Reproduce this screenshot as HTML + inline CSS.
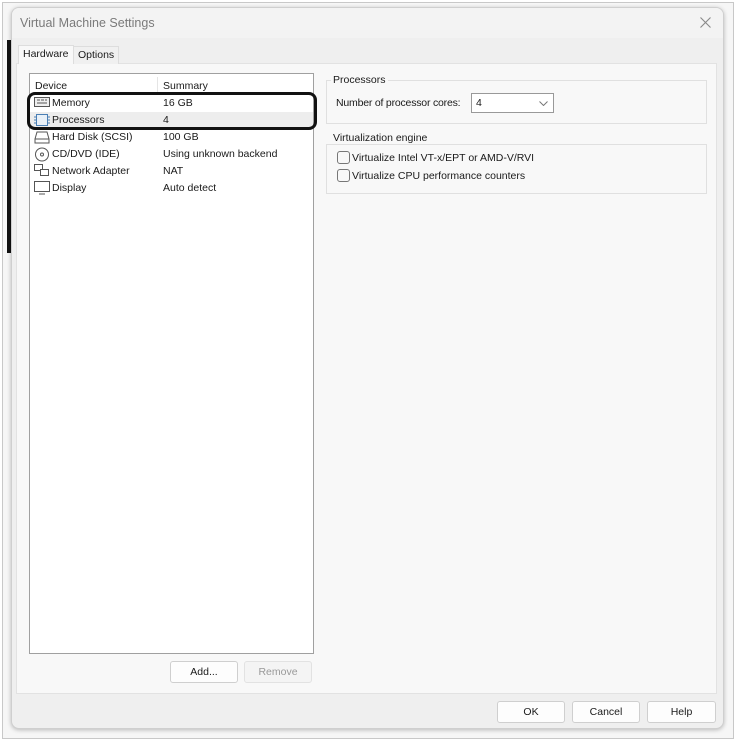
<!DOCTYPE html>
<html><head><meta charset="utf-8"><style>
*{box-sizing:border-box;margin:0;padding:0}
body{width:738px;height:742px;background:#fff;position:relative;overflow:hidden;font-family:"Liberation Sans",sans-serif;font-size:10.5px;color:#1a1a1a}
.frame{position:absolute;left:2px;top:2px;width:732px;height:737px;border:1px solid #c8c8c8;background:#f6f6f6}
.strip{position:absolute;left:7px;top:40px;width:4px;height:213px;background:#111}
.dlg{position:absolute;left:11px;top:7px;width:713px;height:722px;background:#efefef;border:1px solid #cfcfcf;border-radius:8px;box-shadow:0 1px 4px rgba(0,0,0,.25);overflow:hidden}
.title{position:absolute;left:0;top:0;width:100%;height:30px;background:#f3f3f3;font-size:12.5px;color:#7a7a7a;padding:8px 0 0 8px}
.panel{position:absolute;left:4px;top:55px;width:701px;height:631px;background:#f8f8f8;border:1px solid #e2e2e2}
.tab{position:absolute;top:38px;height:18px;padding:2px 4px;border:1px solid #ddd;border-bottom:none;background:#f0f0f0}
.list{position:absolute;left:17px;top:65px;width:285px;height:581px;background:#fff;border:1px solid #a0a0a0}
.row{position:absolute;left:0;width:283px;height:17px;line-height:17px}
.row .n{position:absolute;left:22px}.row .s{position:absolute;left:133px}
.row svg{position:absolute;left:4px;top:1px}
.hl{position:absolute;left:15px;top:84px;width:290px;height:38px;border:3px solid #111;border-radius:8px}
.btn{position:absolute;height:22px;background:#fdfdfd;border:1px solid #cfcfcf;border-radius:3px;text-align:center;line-height:20px}
.grp{position:absolute;border:1px solid #e0e0e0}
.gl{position:absolute;background:#f8f8f8;padding:0 2px}
.cb{position:absolute;width:13px;height:13px;border:1px solid #777;border-radius:3px;background:#f8f8f8}
</style></head><body>
<div class="frame"></div><div class="strip"></div>
<div class="dlg">
<div class="title">Virtual Machine Settings</div>
<svg style="position:absolute;right:12px;top:9px" width="11" height="11"><path d="M0.5 0.5L10.5 10.5M10.5 0.5L0.5 10.5" stroke="#888" stroke-width="1.1"/></svg>
<div class="panel"></div>
<div class="tab" style="left:6px;background:#f8f8f8;top:37px;height:19px">Hardware</div>
<div class="tab" style="left:61px">Options</div>
<div class="list">
<div class="row" style="top:4px"><span style="position:absolute;left:5px">Device</span><span class="s">Summary</span></div>
<div style="position:absolute;left:127px;top:3px;width:1px;height:17px;background:#e5e5e5"></div>
<div class="row" style="top:21px"><svg width="16" height="12"><rect x="0.5" y="1.5" width="15" height="9" fill="#eee" stroke="#555"/><path d="M3 4h3M7 4h3M11 4h2M3 7h10" stroke="#555"/></svg><span class="n">Memory</span><span class="s">16 GB</span></div>
<div class="row" style="top:38px;background:#ededed"><svg width="16" height="14"><rect x="2.5" y="1.5" width="11" height="11" fill="#e8f0f8" stroke="#4a7fb5"/><path d="M0 4h2M0 7h2M0 10h2M14 4h2M14 7h2M14 10h2" stroke="#4a7fb5"/></svg><span class="n">Processors</span><span class="s">4</span></div>
<div class="row" style="top:55px"><svg width="16" height="14"><path d="M3 2h10l2 7v4H1V9z" fill="#fff" stroke="#555"/><path d="M1 9h14" stroke="#555"/></svg><span class="n">Hard Disk (SCSI)</span><span class="s">100 GB</span></div>
<div class="row" style="top:72px"><svg width="16" height="15"><circle cx="8" cy="7.5" r="6.5" fill="#fff" stroke="#555"/><circle cx="8" cy="7.5" r="1.5" fill="none" stroke="#555"/></svg><span class="n">CD/DVD (IDE)</span><span class="s">Using unknown backend</span></div>
<div class="row" style="top:89px"><svg width="16" height="14"><rect x="0.5" y="0.5" width="8" height="6" fill="#fff" stroke="#555"/><rect x="6.5" y="5.5" width="8" height="6" fill="#fff" stroke="#555"/></svg><span class="n">Network Adapter</span><span class="s">NAT</span></div>
<div class="row" style="top:106px"><svg width="17" height="14"><rect x="0.5" y="0.5" width="15" height="10" fill="#fff" stroke="#555"/><path d="M5 13h6" stroke="#555"/></svg><span class="n">Display</span><span class="s">Auto detect</span></div>
</div>
<div class="hl"></div>
<div class="btn" style="left:158px;top:653px;width:68px">Add...</div>
<div class="btn" style="left:232px;top:653px;width:68px;color:#999;background:#f4f4f4;border-color:#e2e2e2">Remove</div>
<div class="grp" style="left:314px;top:72px;width:381px;height:44px"></div>
<div class="gl" style="left:319px;top:66px">Processors</div>
<div style="position:absolute;left:324px;top:89px;letter-spacing:-0.2px">Number of processor cores:</div>
<div style="position:absolute;left:459px;top:85px;width:83px;height:20px;background:#fff;border:1px solid #999;padding:3px 4px">4<svg style="position:absolute;right:5px;top:7px" width="9" height="5"><path d="M0.5 0.5L4.5 4.5L8.5 0.5" stroke="#777" fill="none"/></svg></div>
<div class="grp" style="left:314px;top:136px;width:381px;height:50px"></div>
<div class="gl" style="left:319px;top:124px">Virtualization engine</div>
<div class="cb" style="left:325px;top:143px"></div><div style="position:absolute;left:340px;top:144px">Virtualize Intel VT-x/EPT or AMD-V/RVI</div>
<div class="cb" style="left:325px;top:161px"></div><div style="position:absolute;left:340px;top:162px">Virtualize CPU performance counters</div>
<div class="btn" style="left:485px;top:693px;width:68px">OK</div>
<div class="btn" style="left:560px;top:693px;width:68px">Cancel</div>
<div class="btn" style="left:635px;top:693px;width:69px">Help</div>
</div>
</body></html>
